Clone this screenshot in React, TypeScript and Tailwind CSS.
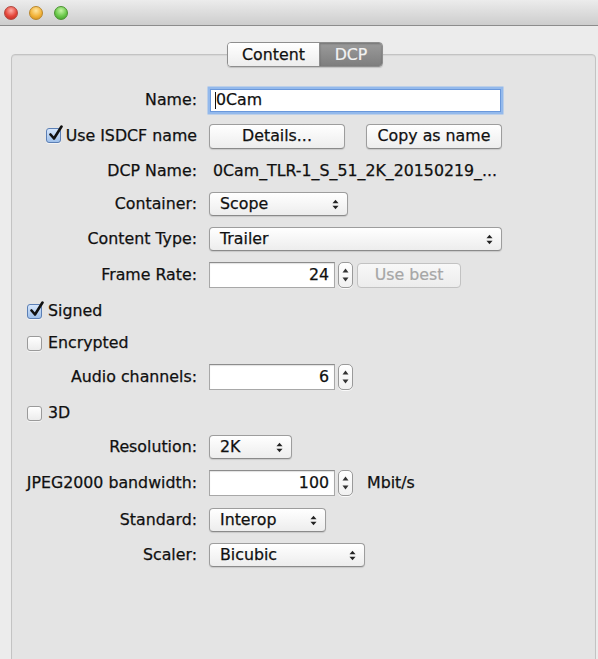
import React from "react";

function SelArrows() {
  return (
    <svg width="7" height="11" viewBox="0 0 7 11" className="shrink-0">
      <path d="M0.5 4.2 L3.5 0.8 L6.5 4.2 Z" fill="#222" />
      <path d="M0.5 6.8 L3.5 10.2 L6.5 6.8 Z" fill="#222" />
    </svg>
  );
}

function Stepper() {
  return (
    <div className="ml-[3px] w-[15px] h-[26px] rounded-[5px] border border-[#9a9a9a] bg-gradient-to-b from-white to-[#f1f1f1] flex flex-col items-center justify-center gap-[4px] shadow-[0_1px_0_rgba(255,255,255,0.8)]">
      <svg width="7" height="5" viewBox="0 0 7 5">
        <path d="M0.5 4.5 L3.5 0.5 L6.5 4.5 Z" fill="#333" />
      </svg>
      <svg width="7" height="5" viewBox="0 0 7 5">
        <path d="M0.5 0.5 L3.5 4.5 L6.5 0.5 Z" fill="#333" />
      </svg>
    </div>
  );
}

function NumInput({ value, w }: { value: string; w: string }) {
  return (
    <div className="flex items-center">
      <div
        className={`${w} h-[26px] bg-white border border-[#a8a8a8] border-t-[#8c8c8c] shadow-[inset_0_1px_1px_rgba(0,0,0,0.12)] flex items-center justify-end pr-[5px]`}
      >
        {value}
      </div>
      <Stepper />
    </div>
  );
}

function Select({ value, w }: { value: string; w: string }) {
  return (
    <div
      className={`${w} h-[24px] rounded-[4px] border border-[#9d9d9d] border-b-[#8a8a8a] bg-gradient-to-b from-white to-[#ededed] shadow-[0_1px_1px_rgba(0,0,0,0.12)] flex items-center justify-between pl-[10px] pr-[8px]`}
    >
      <span>{value}</span>
      <SelArrows />
    </div>
  );
}

function Button({
  label,
  w,
  disabled,
}: {
  label: string;
  w: string;
  disabled?: boolean;
}) {
  return (
    <div
      className={`${w} h-[25px] rounded-[4px] border flex items-center justify-center ${
        disabled
          ? "border-[#c2c2c2] bg-gradient-to-b from-[#f8f8f8] to-[#ececec] text-[#a6a6a6] [-webkit-text-stroke:0.2px_#a6a6a6]"
          : "border-[#9d9d9d] border-b-[#8a8a8a] bg-gradient-to-b from-white to-[#ededed] shadow-[0_1px_1px_rgba(0,0,0,0.12)]"
      }`}
    >
      {label}
    </div>
  );
}

function Checkbox({ checked }: { checked?: boolean }) {
  return (
    <div
      className={`relative w-[15px] h-[15px] rounded-[3px] border shrink-0 ${
        checked
          ? "border-[#5b7fb5] bg-gradient-to-b from-[#d6e6fb] to-[#9fc0ea]"
          : "border-[#9a9a9a] bg-gradient-to-b from-white to-[#ececec]"
      } shadow-[0_1px_0_rgba(255,255,255,0.6)]`}
    >
      {checked && (
        <svg
          width="16"
          height="17"
          viewBox="0 0 16 17"
          className="absolute left-[1px] top-[-4px]"
        >
          <path
            d="M2.5 9.5 L6 13.5 L13.5 1.5"
            stroke="#111"
            strokeWidth="2.6"
            fill="none"
            strokeLinecap="round"
            strokeLinejoin="round"
          />
        </svg>
      )}
    </div>
  );
}

function Label({ children }: { children: React.ReactNode }) {
  return (
    <div className="w-[185px] shrink-0 flex justify-end items-center mr-[12px]">
      {children}
    </div>
  );
}

function Light({ cls }: { cls: string }) {
  return <div className={`w-[14px] h-[14px] rounded-full border ${cls}`} />;
}

export default function App() {
  return (
    <div className="w-[598px] h-[659px] overflow-hidden bg-[#ececec] font-['DejaVu_Sans',sans-serif] text-[15.8px] text-[#101010] leading-none [-webkit-text-stroke:0.25px_#101010]">
      {/* Title bar */}
      <div className="h-[26px] border-b border-[#8c8c8c] bg-gradient-to-b from-[#ececec] to-[#cdcdcd] flex items-center pl-[4px] gap-[11px]">
        <Light cls="border-[#b2463d] bg-[radial-gradient(circle_at_50%_30%,#ffb0a8,#e5463a_55%,#b5281f)]" />
        <Light cls="border-[#b9862a] bg-[radial-gradient(circle_at_50%_30%,#ffe6a0,#f2b33a_55%,#c9881a)]" />
        <Light cls="border-[#4a9230] bg-[radial-gradient(circle_at_50%_30%,#c6f5a6,#6ac84a_55%,#3a9427)]" />
      </div>

      {/* Tabs */}
      <div className="relative z-10 mt-[16px] flex justify-center pl-[12px]">
        <div className="flex h-[25px] rounded-[4px] border border-[#8e8e8e] overflow-hidden shadow-[0_1px_1px_rgba(0,0,0,0.15)]">
          <div className="w-[92px] flex items-center justify-center bg-gradient-to-b from-white to-[#ededed] border-r border-[#8e8e8e] pt-[1px]">
            Content
          </div>
          <div className="w-[62px] flex items-center justify-center bg-gradient-to-b from-[#9b9b9b] to-[#7e7e7e] text-[#f2f2f2] [-webkit-text-stroke:0.2px_#f2f2f2] shadow-[inset_0_1px_2px_rgba(0,0,0,0.25)] pt-[1px]">
            DCP
          </div>
        </div>
      </div>

      {/* Panel */}
      <div className="-mt-[13px] ml-[11px] w-[585px] h-[620px] rounded-[4px] border border-[#c3c3c3] bg-[#e4e4e4] shadow-[inset_0_1px_1px_rgba(0,0,0,0.06)] pt-[32px]">
        {/* Name */}
        <div className="flex items-center h-[26px]">
          <Label>Name:</Label>
          <div className="w-[291px] ml-[1px] h-[23px] bg-white border border-[#6a98db] shadow-[0_0_0_2.5px_#93b9ec] flex items-center pl-[4px]">
            <span className="w-[1px] h-[17px] bg-[#111]" />
            <span>0Cam</span>
          </div>
        </div>

        {/* ISDCF */}
        <div className="flex items-center h-[26px] mt-[10px]">
          <Label>
            <div className="flex items-center gap-[5px]">
              <Checkbox checked />
              <span>Use ISDCF name</span>
            </div>
          </Label>
          <Button label="Details..." w="w-[136px]" />
          <div className="w-[21px]" />
          <Button label="Copy as name" w="w-[136px]" />
        </div>

        {/* DCP Name */}
        <div className="flex items-center h-[26px] mt-[9px]">
          <Label>DCP Name:</Label>
          <span className="ml-[4px]">0Cam_TLR-1_S_51_2K_20150219_...</span>
        </div>

        {/* Container */}
        <div className="flex items-center h-[26px] mt-[7px]">
          <Label>Container:</Label>
          <Select value="Scope" w="w-[139px]" />
        </div>

        {/* Content Type */}
        <div className="flex items-center h-[26px] mt-[9px]">
          <Label>Content Type:</Label>
          <Select value="Trailer" w="w-[293px]" />
        </div>

        {/* Frame Rate */}
        <div className="flex items-center h-[26px] mt-[10px]">
          <Label>Frame Rate:</Label>
          <NumInput value="24" w="w-[126px]" />
          <div className="w-[4px]" />
          <Button label="Use best" w="w-[104px]" disabled />
        </div>

        {/* Signed */}
        <div className="flex items-center h-[26px] mt-[10px] pl-[15px] gap-[6px]">
          <Checkbox checked />
          <span>Signed</span>
        </div>

        {/* Encrypted */}
        <div className="flex items-center h-[26px] mt-[6px] pl-[15px] gap-[6px]">
          <Checkbox />
          <span>Encrypted</span>
        </div>

        {/* Audio channels */}
        <div className="flex items-center h-[26px] mt-[8px]">
          <Label>Audio channels:</Label>
          <NumInput value="6" w="w-[126px]" />
        </div>

        {/* 3D */}
        <div className="flex items-center h-[26px] mt-[10px] pl-[15px] gap-[6px]">
          <Checkbox />
          <span>3D</span>
        </div>

        {/* Resolution */}
        <div className="flex items-center h-[26px] mt-[8px]">
          <Label>Resolution:</Label>
          <Select value="2K" w="w-[83px]" />
        </div>

        {/* JPEG2000 */}
        <div className="flex items-center h-[26px] mt-[10px]">
          <Label>JPEG2000 bandwidth:</Label>
          <NumInput value="100" w="w-[126px]" />
          <span className="ml-[14px]">Mbit/s</span>
        </div>

        {/* Standard */}
        <div className="flex items-center h-[26px] mt-[11px]">
          <Label>Standard:</Label>
          <Select value="Interop" w="w-[117px]" />
        </div>

        {/* Scaler */}
        <div className="flex items-center h-[26px] mt-[9px]">
          <Label>Scaler:</Label>
          <Select value="Bicubic" w="w-[156px]" />
        </div>
      </div>
    </div>
  );
}
